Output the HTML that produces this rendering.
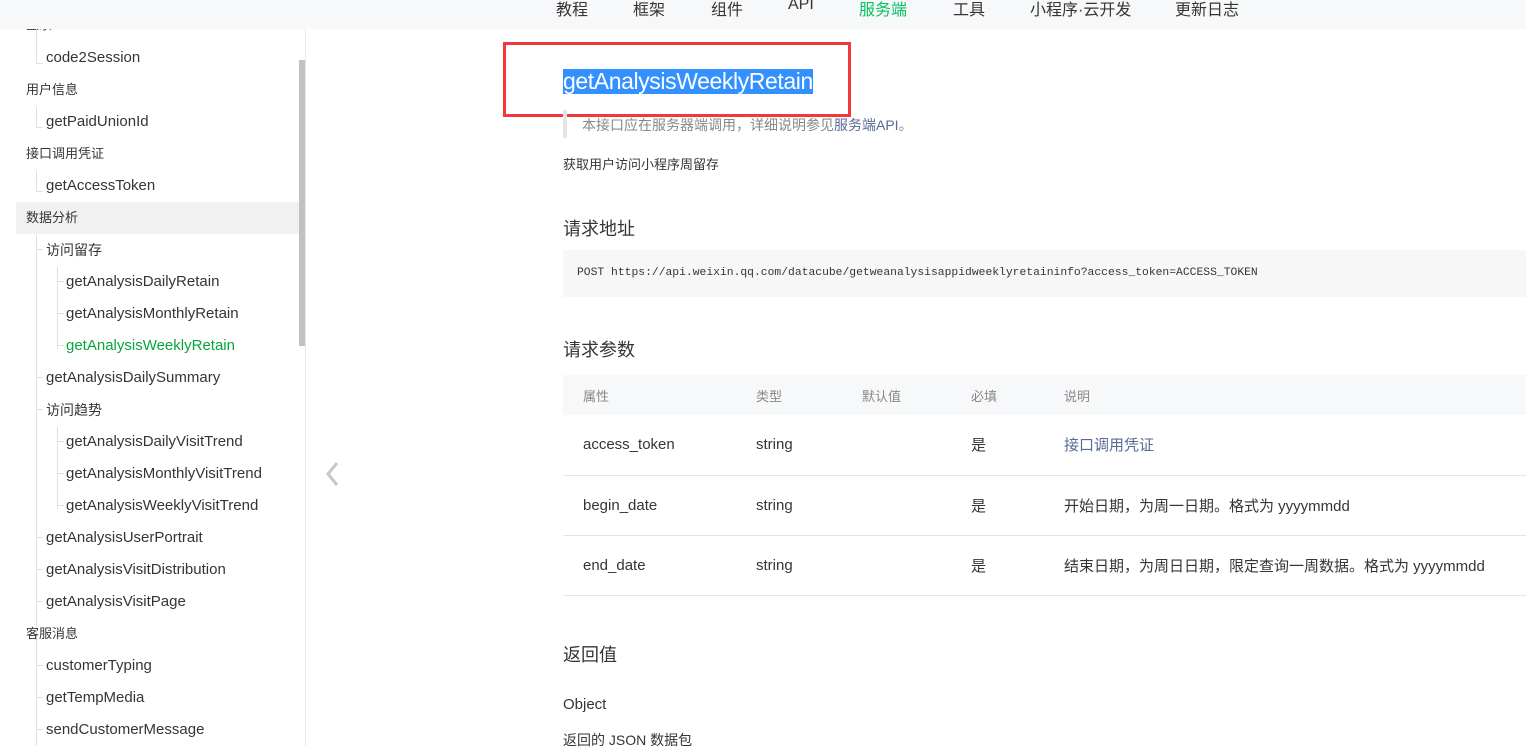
<!DOCTYPE html>
<html><head><meta charset="utf-8"><style>
*{margin:0;padding:0;box-sizing:border-box}
body{width:1526px;height:746px;overflow:hidden;background:#fff;font-family:"Liberation Sans","Noto Sans CJK SC",sans-serif;color:#353535;position:relative}
.hd{position:absolute;left:0;top:0;width:1526px;height:29px;background:#f7f8fa}
.hd span{position:absolute;top:-4px;font-size:16px;color:#353535}
.sb{position:absolute;left:0;top:29px;width:306px;height:717px;border-right:1px solid #e7e7e7;overflow:hidden}
.it{position:absolute;font-size:15px;height:32px;line-height:32px;white-space:nowrap}
.l1{left:26px;font-size:13px}
.l2{left:46px}
.l3{left:66px}
.vl{position:absolute;width:1px;background:#e0e0e0}
.hl{position:absolute;height:1px;width:7px;background:#e0e0e0}
.sc{position:absolute;left:299px;top:60px;width:6px;height:286px;background:#c1c1c1}
.m{position:absolute;white-space:nowrap}
table{position:absolute;left:563px;top:375px;width:963px;border-collapse:collapse;font-size:15px}
th{background:#f7f8fa;height:40px;text-align:left;font-weight:normal;color:#888;font-size:13px}
td{height:60px;border-bottom:1px solid #e5e5e5;color:#353535}
th:first-child,td:first-child{padding-left:20px}
a{color:#576b95;text-decoration:none}
</style></head><body>
<div class="hd">
<span style="left:556px">教程</span><span style="left:633px">框架</span><span style="left:711px">组件</span><span style="left:788px">API</span><span style="left:859px;color:#07c160">服务端</span><span style="left:953px">工具</span><span style="left:1030px">小程序·云开发</span><span style="left:1175px">更新日志</span>
</div>
<div class="sb">
<div class="it l1" style="top:-20px">登录</div>
<div class="vl" style="left:36px;top:0;height:34px"></div><div class="hl" style="left:36px;top:34px"></div>
<div class="it l2" style="top:13px">code2Session</div>
<div class="it l1" style="top:45px">用户信息</div>
<div class="vl" style="left:36px;top:78px;height:20px"></div><div class="hl" style="left:36px;top:98px"></div>
<div class="it l2" style="top:77px">getPaidUnionId</div>
<div class="it l1" style="top:109px">接口调用凭证</div>
<div class="vl" style="left:36px;top:142px;height:20px"></div><div class="hl" style="left:36px;top:162px"></div>
<div class="it l2" style="top:141px">getAccessToken</div>
<div style="position:absolute;left:16px;top:173px;width:283px;height:32px;background:#f1f1f1"></div>
<div class="it l1" style="top:173px">数据分析</div>
<div class="vl" style="left:36px;top:206px;height:520px"></div>
<div class="hl" style="left:36px;top:220px"></div>
<div class="it l2" style="top:205px;font-size:14px">访问留存</div>
<div class="vl" style="left:57px;top:238px;height:82px"></div>
<div class="hl" style="left:57px;top:252px"></div><div class="hl" style="left:57px;top:284px"></div><div class="hl" style="left:57px;top:316px"></div>
<div class="it l3" style="top:237px">getAnalysisDailyRetain</div>
<div class="it l3" style="top:269px">getAnalysisMonthlyRetain</div>
<div class="it l3" style="top:301px;color:#07a53f">getAnalysisWeeklyRetain</div>
<div class="hl" style="left:36px;top:348px"></div>
<div class="it l2" style="top:333px">getAnalysisDailySummary</div>
<div class="hl" style="left:36px;top:380px"></div>
<div class="it l2" style="top:365px;font-size:14px">访问趋势</div>
<div class="vl" style="left:57px;top:398px;height:82px"></div>
<div class="hl" style="left:57px;top:412px"></div><div class="hl" style="left:57px;top:444px"></div><div class="hl" style="left:57px;top:476px"></div>
<div class="it l3" style="top:397px">getAnalysisDailyVisitTrend</div>
<div class="it l3" style="top:429px">getAnalysisMonthlyVisitTrend</div>
<div class="it l3" style="top:461px">getAnalysisWeeklyVisitTrend</div>
<div class="hl" style="left:36px;top:508px"></div>
<div class="it l2" style="top:493px">getAnalysisUserPortrait</div>
<div class="hl" style="left:36px;top:540px"></div>
<div class="it l2" style="top:525px">getAnalysisVisitDistribution</div>
<div class="hl" style="left:36px;top:572px"></div>
<div class="it l2" style="top:557px">getAnalysisVisitPage</div>
<div class="it l1" style="top:589px">客服消息</div>
<div class="vl" style="left:36px;top:622px;height:100px"></div>
<div class="hl" style="left:36px;top:636px"></div><div class="hl" style="left:36px;top:668px"></div><div class="hl" style="left:36px;top:700px"></div>
<div class="it l2" style="top:621px">customerTyping</div>
<div class="it l2" style="top:653px">getTempMedia</div>
<div class="it l2" style="top:685px">sendCustomerMessage</div>
</div>
<div class="sc"></div>
<svg style="position:absolute;left:322px;top:460px" width="20" height="28"><path d="M15 3 L6 14 L15 25" stroke="#c8c8c8" stroke-width="3" fill="none"/></svg>
<div style="position:absolute;left:503px;top:42px;width:348px;height:75px;border:3px solid #f0393b"></div>
<div class="m" style="left:563px;top:69px;height:25px;background:#3390ff;color:#fff;font-size:23px;line-height:25px;letter-spacing:-0.4px">getAnalysisWeeklyRetain</div>
<div style="position:absolute;left:563px;top:110px;width:4px;height:28px;background:#e5e5e5"></div>
<div class="m" style="left:582px;top:115px;font-size:14px;color:#888">本接口应在服务器端调用，详细说明参见<a>服务端API</a>。</div>
<div class="m" style="left:563px;top:154px;font-size:13px">获取用户访问小程序周留存</div>
<div class="m" style="left:563px;top:215px;font-size:18px">请求地址</div>
<div style="position:absolute;left:563px;top:250px;width:963px;height:47px;background:#f7f7f7"></div>
<div class="m" style="left:577px;top:267px;font-size:11.35px;font-family:'Liberation Mono',monospace">POST https://api.weixin.qq.com/datacube/getweanalysisappidweeklyretaininfo?access_token=ACCESS_TOKEN</div>
<div class="m" style="left:563px;top:336px;font-size:18px">请求参数</div>
<table>
<tr><th style="width:193px">属性</th><th style="width:106px">类型</th><th style="width:109px">默认值</th><th style="width:93px">必填</th><th>说明</th></tr>
<tr><td>access_token</td><td>string</td><td></td><td>是</td><td><a>接口调用凭证</a></td></tr>
<tr><td>begin_date</td><td>string</td><td></td><td>是</td><td>开始日期，为周一日期。格式为 yyyymmdd</td></tr>
<tr><td>end_date</td><td>string</td><td></td><td>是</td><td>结束日期，为周日日期，限定查询一周数据。格式为 yyyymmdd</td></tr>
</table>
<div class="m" style="left:563px;top:641px;font-size:18px">返回值</div>
<div class="m" style="left:563px;top:696px;font-size:15px">Object</div>
<div class="m" style="left:563px;top:730px;font-size:14px">返回的 JSON 数据包</div>
</body></html>
